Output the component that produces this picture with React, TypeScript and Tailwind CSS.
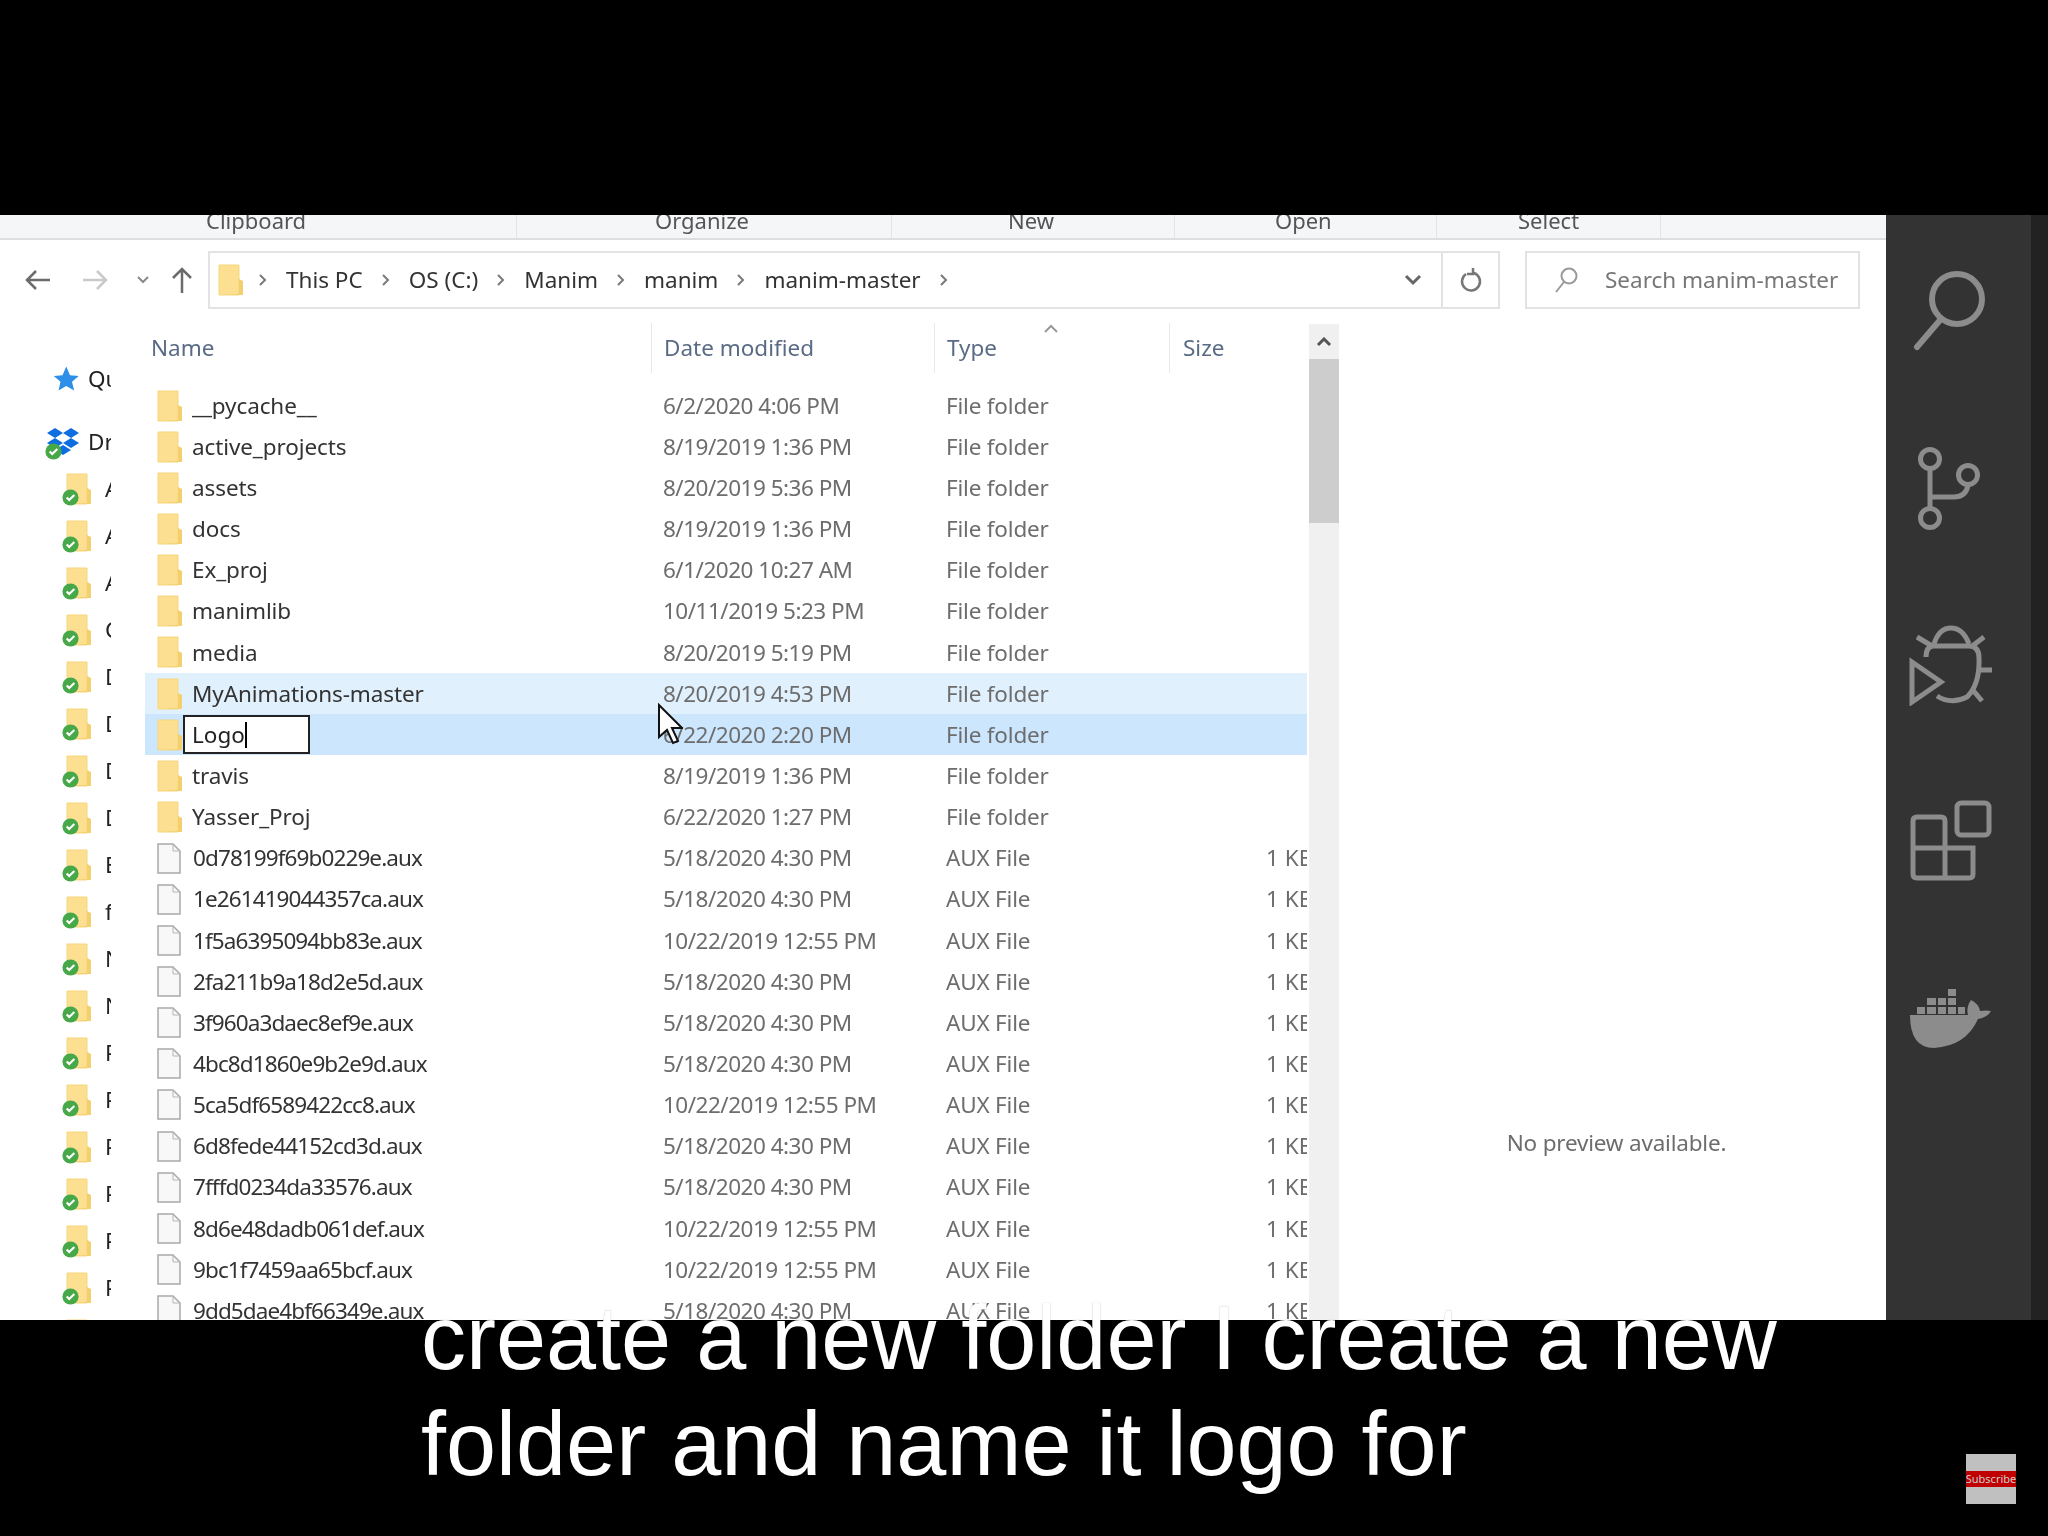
const FONT = "font-['Noto_Sans',sans-serif]";

const folders = [
  { name: "__pycache__", date: "6/2/2020 4:06 PM" },
  { name: "active_projects", date: "8/19/2019 1:36 PM" },
  { name: "assets", date: "8/20/2019 5:36 PM" },
  { name: "docs", date: "8/19/2019 1:36 PM" },
  { name: "Ex_proj", date: "6/1/2020 10:27 AM" },
  { name: "manimlib", date: "10/11/2019 5:23 PM" },
  { name: "media", date: "8/20/2019 5:19 PM" },
  { name: "MyAnimations-master", date: "8/20/2019 4:53 PM", hover: true },
  { name: "Logo", date: "6/22/2020 2:20 PM", editing: true },
  { name: "travis", date: "8/19/2019 1:36 PM" },
  { name: "Yasser_Proj", date: "6/22/2020 1:27 PM" },
];

const files = [
  { name: "0d78199f69b0229e.aux", date: "5/18/2020 4:30 PM" },
  { name: "1e261419044357ca.aux", date: "5/18/2020 4:30 PM" },
  { name: "1f5a6395094bb83e.aux", date: "10/22/2019 12:55 PM" },
  { name: "2fa211b9a18d2e5d.aux", date: "5/18/2020 4:30 PM" },
  { name: "3f960a3daec8ef9e.aux", date: "5/18/2020 4:30 PM" },
  { name: "4bc8d1860e9b2e9d.aux", date: "5/18/2020 4:30 PM" },
  { name: "5ca5df6589422cc8.aux", date: "10/22/2019 12:55 PM" },
  { name: "6d8fede44152cd3d.aux", date: "5/18/2020 4:30 PM" },
  { name: "7fffd0234da33576.aux", date: "5/18/2020 4:30 PM" },
  { name: "8d6e48dadb061def.aux", date: "10/22/2019 12:55 PM" },
  { name: "9bc1f7459aa65bcf.aux", date: "10/22/2019 12:55 PM" },
  { name: "9dd5dae4bf66349e.aux", date: "5/18/2020 4:30 PM" },
];

function FolderIcon() {
  return (
    <svg width="26" height="32" viewBox="0 0 26 32" className="shrink-0">
      <path d="M1 1h20v30H1z" fill="#fcdf90" stroke="#f5d77f" />
      <path d="M21 15l4 2v14H5l16-1z" fill="#f4cf6e" />
    </svg>
  );
}

function FileIcon() {
  return (
    <svg width="24" height="31" viewBox="0 0 24 31" className="shrink-0">
      <path d="M1 1h15l7 7v22H1z" fill="#f8f8f8" stroke="#a9a9a9" strokeWidth="1.5" />
      <path d="M16 1v7h7" fill="none" stroke="#b5b5b5" />
    </svg>
  );
}

function Chevron() {
  return (
    <svg width="10" height="14" viewBox="0 0 10 14" className="shrink-0">
      <path d="M2 2l5 5-5 5" fill="none" stroke="#7a7a7a" strokeWidth="2" />
    </svg>
  );
}

function Row({ name, date, type, size, hover, editing, isFile }: { name: string; date: string; type: string; size?: string; hover?: boolean; editing?: boolean; isFile?: boolean }) {
  const bg = editing ? "bg-[#cce6fd]" : hover ? "bg-[#e1f0fd]" : "";
  return (
    <div className={`flex h-[41.15px] shrink-0 items-center overflow-hidden text-[22.5px] ${bg}`}>
      <div className="flex w-[518px] shrink-0 items-center pl-3">
        {isFile ? <FileIcon /> : <FolderIcon />}
        {editing ? (
          <div className="flex h-[39px] w-[127px] items-center border-2 border-[#222] bg-white pl-[7px] text-[#222]">
            {name}
            <span className="h-[26px] w-[2px] bg-black" />
          </div>
        ) : (
          <span className={`whitespace-nowrap text-[#333] ${isFile ? "ml-[12px] tracking-[-0.9px]" : "ml-[9px] tracking-[-0.1px]"}`}>{name}</span>
        )}
      </div>
      <span className="w-[283px] shrink-0 whitespace-nowrap tracking-[-0.5px] text-[#6d6d6d]">{date}</span>
      <span className="w-[320px] shrink-0 whitespace-nowrap tracking-[-0.2px] text-[#6d6d6d]">{type}</span>
      {size && <span className="w-[41px] shrink-0 whitespace-nowrap text-[#6d6d6d]">{size}</span>}
    </div>
  );
}

const navLetters = ["A", "A", "A", "C", "D", "D", "D", "D", "E", "f", "N", "N", "P", "P", "P", "P", "P", "P", "P"];

function SyncBadge({ className }: { className: string }) {
  return (
    <svg width="17" height="17" viewBox="0 0 20 20" className={`absolute ${className}`}>
      <circle cx="10" cy="10" r="9.500" fill="#47a84a" />
      <path d="M5.500 10l3 3 6-6" fill="none" stroke="#fff" strokeWidth="2.500" />
    </svg>
  );
}

function NavPane() {
  return (
    <div className="flex w-[111px] shrink-0 flex-col overflow-hidden pt-[46px] text-[22.5px] text-[#222]">
      <div className="flex h-[47px] shrink-0 items-center pl-[50px]">
        <svg width="30" height="30" viewBox="0 0 24 24" className="shrink-0">
          <path d="M13 2l3 7 7 .6-5.400 4.600 1.700 7-6.300-3.700-6.200 3.700 1.600-7L3 9.600l7-.6z" fill="#2e8fe8" />
        </svg>
        <span className="ml-[8px]">Quick</span>
      </div>
      <div className="mt-4 flex h-[47px] shrink-0 items-center pl-[46px]">
        <div className="relative shrink-0">
          <svg width="34" height="32" viewBox="0 0 34 32" className="block">
            <path d="M9 2l8 5-8 5-8-5zM25 2l8 5-8 5-8-5zM9 12l8 5-8 5-8-5zM25 12l8 5-8 5-8-5zM17 19l8 5-8 5-8-5z" fill="#0d6ee0" />
          </svg>
          <SyncBadge className="-bottom-[2px] -left-[1px]" />
        </div>
        <span className="ml-[8px]">Dropbox</span>
      </div>
      {navLetters.map((l, i) => (
        <div key={i} className="flex h-[47px] shrink-0 items-center pl-[66px]">
          <div className="relative shrink-0">
            <FolderIcon />
            <SyncBadge className="-bottom-[1px] -left-[4px]" />
          </div>
          <span className="ml-[13px]">{l}</span>
        </div>
      ))}
    </div>
  );
}

function ActivityIcons() {
  return (
    <div className="flex w-[145px] shrink-0 flex-col items-center bg-[#333333] pr-[16px] pt-[52px]">
      <svg width="80" height="84" viewBox="0 0 80 84" fill="none" stroke="#8c8c8c" strokeWidth="6">
        <circle cx="46" cy="32" r="25" />
        <path d="M30 52L6 80" strokeLinecap="round" />
      </svg>
      <svg width="66" height="84" viewBox="0 0 66 84" fill="none" stroke="#8c8c8c" strokeWidth="5" className="ml-[-8px] mt-[96px]">
        <circle cx="16" cy="12" r="9.500" />
        <circle cx="16" cy="71" r="9.500" />
        <circle cx="54" cy="28" r="9.500" />
        <path d="M16 22v40M16 50h24q12 0 14-12" />
      </svg>
      <svg width="84" height="82" viewBox="0 0 84 82" fill="none" stroke="#8c8c8c" strokeWidth="5" className="mt-[93px]">
        <path d="M3 38l29 20L3 78z" />
        <path d="M17 33q0-11 8-11h35q10 0 10 12 1 26-12 39-16 8-30-1" />
        <path d="M25 20q5-16 17-16t18 16" />
        <path d="M8 13l15 9M75 13L62 23M70 46h13M63 65l10 12" />
      </svg>
      <svg width="82" height="82" viewBox="0 0 82 82" fill="none" stroke="#8c8c8c" strokeWidth="5" className="mt-[94px]">
        <rect x="47" y="3" width="32" height="32" rx="4" />
        <path d="M3 48V21q0-4 4-4h24q4 0 4 4v57H7q-4 0-4-4V48h60v26q0 4-4 4H35" />
      </svg>
      <svg width="82" height="60" viewBox="0 0 82 60" fill="#8c8c8c" className="mt-[106px]">
        <path d="M0 27h58q-2-8 3-15 8 4 9 11 6-1 11 0-3 6-13 8-12 27-44 29Q0 60 0 27z" />
        <path d="M7 19h8v7H7zM17 19h9v7h-9zM28 19h8v7h-8zM38 19h8v7h-8zM48 19h7v7h-7zM17 10h9v7h-9zM28 10h8v7h-8zM38 10h8v7h-8zM38 1h8v7h-8z" />
      </svg>
    </div>
  );
}

export default function App() {
  return (
    <div className={`relative flex h-[1536px] w-[2048px] flex-col overflow-hidden bg-black ${FONT}`}>
      <div className="h-[215px] shrink-0" />
      <div className="flex h-[1105px] shrink-0 blur-[0.5px]">
        <div className="flex w-[1886px] shrink-0 flex-col bg-white">
          {/* ribbon group labels, cut off by the black band above */}
          <div className="flex h-[25px] shrink-0 overflow-hidden border-b-2 border-[#dedede] bg-[#f5f6f7] text-[22px] leading-[11px] text-[#555]">
            <div className="w-[516px] shrink-0 pl-[206px]">Clipboard</div>
            <div className="w-[375px] shrink-0 border-l border-[#e4e4e4] pl-[138px]">Organize</div>
            <div className="w-[283px] shrink-0 border-l border-[#e4e4e4] pl-[116px]">New</div>
            <div className="w-[262px] shrink-0 border-l border-[#e4e4e4] pl-[100px]">Open</div>
            <div className="w-[225px] shrink-0 border-x border-[#e4e4e4] pl-[81px]">Select</div>
          </div>
          {/* address bar */}
          <div className="mt-[11px] flex h-[58px] shrink-0 items-center">
            <div className="flex w-[208px] shrink-0 items-center pl-[24px]">
              <svg width="28" height="24" viewBox="0 0 28 24" fill="none" stroke="#6b6b6b" strokeWidth="2.500">
                <path d="M26 12H3M12 3l-9 9 9 9" />
              </svg>
              <svg width="28" height="24" viewBox="0 0 28 24" fill="none" stroke="#c9c9c9" strokeWidth="2.500" className="ml-[29px]">
                <path d="M2 12h23M16 3l9 9-9 9" />
              </svg>
              <svg width="14" height="10" viewBox="0 0 14 10" fill="none" stroke="#8a8a8a" strokeWidth="2" className="ml-[27px]">
                <path d="M2 2l5 5 5-5" />
              </svg>
              <svg width="24" height="28" viewBox="0 0 24 28" fill="none" stroke="#6b6b6b" strokeWidth="2.500" className="ml-[20px]">
                <path d="M12 27V3M3 12l9-9 9 9" />
              </svg>
            </div>
            <div className="flex h-[58px] w-[1292px] shrink-0 items-center border-2 border-[#e3e3e3] pl-[8px] text-[22.5px] text-[#333]">
              <svg width="26" height="32" viewBox="0 0 26 32" className="shrink-0">
                <path d="M1 1h20v30H1z" fill="#fcdf90" stroke="#f5d77f" />
                <path d="M21 15l4 2v14H5l16-1z" fill="#f4cf6e" />
              </svg>
              <div className="ml-[14px] flex flex-1 items-center gap-[18px]">
                <Chevron />
                <span>This PC</span>
                <Chevron />
                <span>OS (C:)</span>
                <Chevron />
                <span>Manim</span>
                <Chevron />
                <span>manim</span>
                <Chevron />
                <span>manim-master</span>
                <Chevron />
              </div>
              <svg width="18" height="12" viewBox="0 0 18 12" fill="none" stroke="#666" strokeWidth="3" className="mr-[19px]">
                <path d="M2 2l7 7 7-7" />
              </svg>
              <div className="flex h-full w-[57px] items-center justify-center border-l-2 border-[#e3e3e3]">
                <svg width="24" height="28" viewBox="0 0 24 28" fill="none" stroke="#777" strokeWidth="2.500">
                  <path d="M7 8a9 9 0 1 0 8-1M14 2v6H8" />
                </svg>
              </div>
            </div>
            <div className="ml-[25px] flex h-[58px] w-[335px] shrink-0 items-center border-2 border-[#e3e3e3] pl-[26px] text-[22.5px] text-[#777]">
              <svg width="26" height="28" viewBox="0 0 26 28" fill="none" stroke="#999" strokeWidth="2">
                <circle cx="16" cy="10" r="7.500" />
                <path d="M11 16l-8 10" />
              </svg>
              <span className="ml-[26px] whitespace-nowrap">Search manim-master</span>
            </div>
          </div>
          {/* body */}
          <div className="flex min-h-0 flex-1 overflow-hidden">
            <NavPane />
            <div className="flex w-[1196px] shrink-0 flex-col overflow-hidden pl-[34px]">
              <div className="relative flex h-[76px] shrink-0 items-center pt-[2px] text-[22.5px] text-[#5a6b85]">
                <span className="w-[506px] shrink-0 pl-[6px]">Name</span>
                <span className="flex h-[50px] w-[283px] shrink-0 items-center border-l border-[#e8e8e8] pl-[12px]">Date modified</span>
                <span className="flex h-[50px] w-[235px] shrink-0 items-center border-l border-[#e8e8e8] pl-[12px]">Type</span>
                <span className="flex h-[50px] items-center border-l border-[#e8e8e8] pl-[13px]">Size</span>
                <svg width="16" height="10" viewBox="0 0 16 10" fill="none" stroke="#999" strokeWidth="2" className="absolute left-[898px] top-[15px]">
                  <path d="M2 8l6-6 6 6" />
                </svg>
              </div>
              {folders.map((f) => (
                <Row key={f.name} name={f.name} date={f.date} type="File folder" hover={f.hover} editing={f.editing} />
              ))}
              {files.map((f) => (
                <Row key={f.name} name={f.name} date={f.date} type="AUX File" size="1 KB" isFile />
              ))}
            </div>
            <div className="ml-[2px] mt-[15px] flex w-[30px] shrink-0 flex-col bg-[#f0f0f0]">
              <div className="flex h-[35px] shrink-0 items-center justify-center">
                <svg width="16" height="10" viewBox="0 0 16 10" fill="none" stroke="#555" strokeWidth="3">
                  <path d="M2 8l6-6 6 6" />
                </svg>
              </div>
              <div className="h-[164px] shrink-0 bg-[#cdcdcd]" />
            </div>
            <div className="flex flex-1 items-center justify-center pb-[6px] pl-[8px] pt-[662px] text-[22.5px] tracking-[-0.2px] text-[#6d6d6d]">
              No preview available.
            </div>
          </div>
        </div>
        <ActivityIcons />
        <div className="flex-1 bg-[#222222]" />
      </div>
      {/* caption band, its text rides up over the window */}
      <div className="relative flex-1">
        <div className="absolute left-[421px] top-[-35px] whitespace-nowrap font-['Liberation_Sans',sans-serif] text-[90px] leading-[106px] text-white [text-shadow:0_0_1px_rgba(0,0,0,0.35)]">
          create a new folder I create a new
          <br />
          folder and name it logo for
        </div>
        <div className="absolute left-[1966px] top-[134px] flex h-[50px] w-[50px] items-center bg-[#c0c0c0]">
          <div className="flex h-4 w-full items-center justify-center overflow-hidden bg-[#c00000] text-[11px] text-[#ccc]">
            Subscribe
          </div>
        </div>
      </div>
      {/* mouse pointer over the highlighted rows */}
      <svg width="26" height="42" viewBox="0 0 26 42" className="absolute left-[657px] top-[703px]">
        <path d="M2 2v32l8-7 6 13 5-2-6-13h10z" fill="#fff" stroke="#111" strokeWidth="2" />
      </svg>
    </div>
  );
}
